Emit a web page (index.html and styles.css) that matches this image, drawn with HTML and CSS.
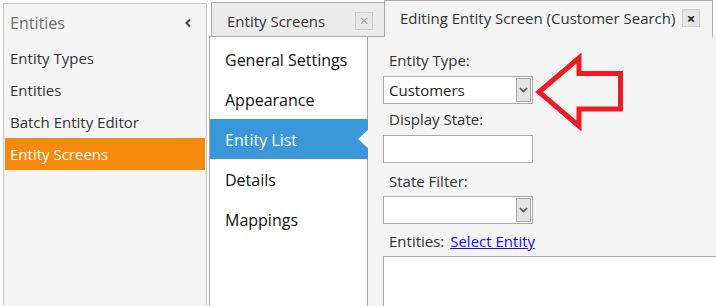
FILE: index.html
```html
<!DOCTYPE html>
<html>
<head>
<meta charset="utf-8">
<link rel="stylesheet" href="styles.css">
</head>
<body>
<div class="app">
  <aside class="side">
    <div class="side-head">
      <span>Entities</span>
      <svg class="chev" width="8" height="10" viewBox="0 0 8 10"><polyline points="6,1.5 2.5,5 6,8.5" fill="none" stroke="#444" stroke-width="2"/></svg>
    </div>
    <ul class="side-list">
      <li>Entity Types</li>
      <li>Entities</li>
      <li>Batch Entity Editor</li>
      <li class="active">Entity Screens</li>
    </ul>
  </aside>
  <main class="main">
    <div class="tabs">
      <div class="tab tab-idle">
        <span class="tab-title">Entity Screens</span>
        <span class="close close-light">×</span>
      </div>
      <div class="tab tab-active">
        <span class="tab-title">Editing Entity Screen (Customer Search)</span>
        <span class="close close-dark">×</span>
      </div>
    </div>
    <div class="body">
      <nav class="menu">
        <div class="menu-item">General Settings</div>
        <div class="menu-item">Appearance</div>
        <div class="menu-item active">Entity List</div>
        <div class="menu-item">Details</div>
        <div class="menu-item">Mappings</div>
      </nav>
      <section class="content">
        <label class="lbl lbl-1">Entity Type:</label>
        <div class="field select">
          <span class="val">Customers</span>
          <span class="dd"><svg width="9" height="6" viewBox="0 0 9 6"><polyline points="1,1 4.5,4.5 8,1" fill="none" stroke="#555" stroke-width="1.6"/></svg></span>
        </div>
        <label class="lbl lbl-2">Display State:</label>
        <div class="field"></div>
        <label class="lbl lbl-3">State Filter:</label>
        <div class="field select">
          <span class="val"></span>
          <span class="dd"><svg width="9" height="6" viewBox="0 0 9 6"><polyline points="1,1 4.5,4.5 8,1" fill="none" stroke="#555" stroke-width="1.6"/></svg></span>
        </div>
        <div class="lbl lbl-4">Entities: <a href="#" class="link">Select Entity</a></div>
        <div class="textarea"></div>
      </section>
    </div>
  </main>
</div>
<svg class="annot" width="716" height="306" viewBox="0 0 716 306">
  <polygon points="539,92 579,58 579,73.5 620.5,73.5 620.5,109 579,109 579,126" fill="none" stroke="#ed1c24" stroke-width="5" stroke-linejoin="miter" stroke-miterlimit="10"/>
</svg>
</body>
</html>
```
FILE: styles.css
```css
html, body {
  margin: 0;
  padding: 0;
  background: #ffffff;
  font-family: "Open Sans", "Noto Sans", sans-serif;
  overflow: hidden;
}
body {
  width: 716px;
  height: 306px;
  position: relative;
}
.app {
  display: flex;
  height: 306px;
}
.side {
  box-sizing: border-box;
  width: 204px;
  margin: 3px 0 0 3px;
  padding: 0 1px;
  border: 1px solid #c4c4c4;
  border-bottom: none;
  background: #f5f5f5;
  flex: none;
}
.side-head {
  height: 38px;
  display: flex;
  align-items: center;
  justify-content: space-between;
  padding: 0 13px 0 5px;
  font-size: 16px;
  color: #6e6e6e;
}
.chev {
  display: block;
}
.side-list {
  list-style: none;
  margin: 0;
  padding: 0;
}
.side-list li {
  height: 32px;
  line-height: 32px;
  padding-left: 5px;
  font-size: 15px;
  color: #333;
}
.side-list li.active {
  background: #f68a0d;
  color: #fff;
}
.main {
  flex: 1;
  margin-left: 2px;
  display: flex;
  flex-direction: column;
  min-width: 0;
}
.tabs {
  height: 38px;
  display: flex;
  align-items: flex-end;
  padding-left: 2px;
  position: relative;
  z-index: 1;
}
.tab {
  box-sizing: border-box;
  display: flex;
  align-items: center;
  justify-content: space-between;
  font-size: 15px;
  color: #333;
  border: 1px solid #a9a9a9;
}
.tab-idle {
  width: 174px;
  height: 35px;
  background: #ececec;
  padding: 2px 11px 0 15px;
}
.tab-active {
  width: 329px;
  height: 37px;
  margin-left: -1px;
  background: #f4f4f4;
  border-bottom: none;
  padding: 0 12px 2px 15px;
}
.close {
  box-sizing: border-box;
  width: 18px;
  height: 18px;
  display: flex;
  align-items: center;
  justify-content: center;
  border: 1px solid #cfcfcf;
  font-size: 15px;
  line-height: 1;
}
.close-light {
  background: #e8e8e8;
  color: #8a9bb0;
}
.close-dark {
  background: #e6e6e6;
  color: #222;
  font-weight: 700;
}
.body {
  flex: 1;
  display: flex;
  margin-top: -1px;
}
.menu {
  box-sizing: border-box;
  width: 159px;
  flex: none;
  background: #fff;
  border: 1px solid #a9a9a9;
  border-bottom: none;
  padding-top: 2px;
}
.menu-item {
  height: 40px;
  line-height: 42px;
  padding-left: 15px;
  font-size: 16px;
  color: #111;
  position: relative;
}
.menu-item.active {
  background: #3a98d9;
  color: #fff;
  margin-right: -1px;
}
.menu-item.active::after {
  content: "";
  position: absolute;
  right: 0;
  top: 11px;
  border-right: 10px solid #fff;
  border-top: 9px solid transparent;
  border-bottom: 9px solid transparent;
}
.content {
  flex: 1;
  background: #f4f4f4;
  padding: 14px 0 0 15px;
  display: flex;
  flex-direction: column;
  align-items: flex-start;
}
.lbl {
  display: block;
  padding-left: 6px;
  font-size: 15px;
  line-height: 20px;
  color: #333;
}
.lbl-1 { margin-bottom: 6px; }
.lbl-2 { margin-top: 5px; margin-bottom: 6px; }
.lbl-3 { margin-top: 8px; margin-bottom: 5px; }
.lbl-4 { margin-top: 7px; margin-bottom: 5px; }
.field {
  box-sizing: border-box;
  width: 150px;
  height: 28px;
  border: 1px solid #a9a9a9;
  background: #fff;
}
.select {
  display: flex;
  align-items: center;
  justify-content: space-between;
  padding: 1px 1px 1px 5px;
}
.val {
  font-size: 15px;
  color: #222;
}
.dd {
  box-sizing: border-box;
  width: 15px;
  height: 24px;
  border: 1px solid #a9a9a9;
  background: #e4e4e4;
  display: flex;
  align-items: center;
  justify-content: center;
}
.dd svg {
  display: block;
}
.link {
  color: #1a0dee;
  text-decoration: underline;
  margin-left: 2px;
}
.textarea {
  box-sizing: border-box;
  width: 340px;
  height: 60px;
  border: 1px solid #a9a9a9;
  background: #fff;
}
.annot {
  position: absolute;
  left: 0;
  top: 0;
  pointer-events: none;
}
```
